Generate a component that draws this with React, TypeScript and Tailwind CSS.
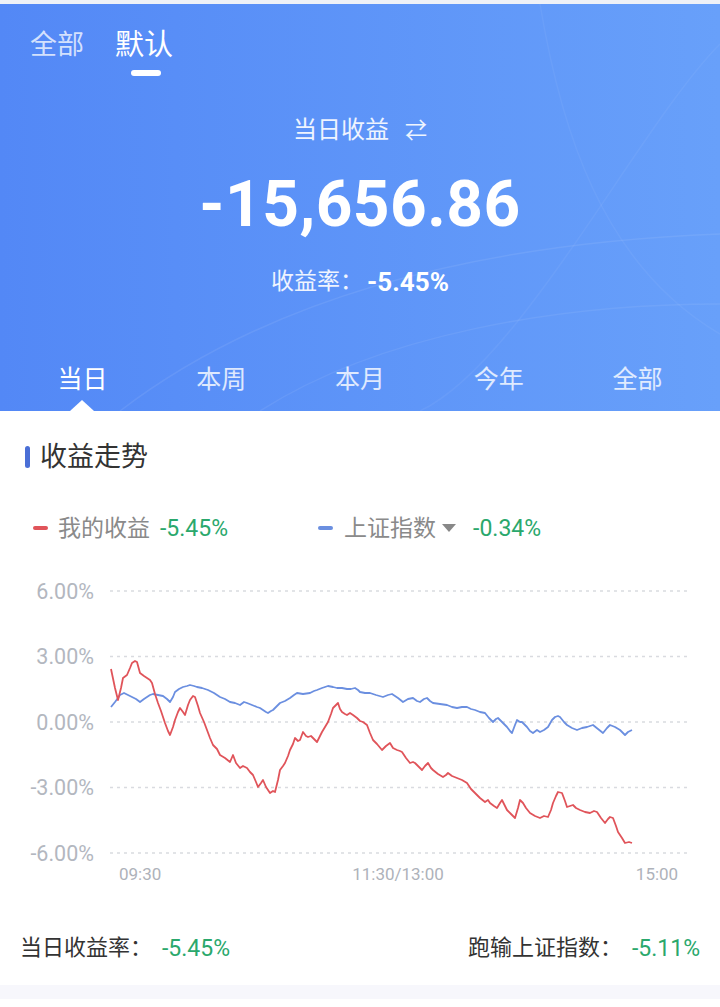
import React from "react";

// 收益曲线数据 (x: 像素, y: 像素)，在图表坐标系里直接描点
const MY_LINE: [number, number][] = [
  [111, 669], [115, 688], [118, 700], [121, 688], [123, 678], [127, 675], [130, 668], [132, 663],
  [135, 661], [137, 662], [140, 673], [144, 676], [147, 678], [150, 680], [152, 683], [155, 694],
  [158, 703], [161, 711], [165, 723], [168, 731], [170, 735], [173, 727], [175, 720], [178, 712],
  [180, 708], [183, 712], [185, 715], [188, 705], [190, 700], [193, 696], [195, 697], [198, 706],
  [200, 713], [204, 722], [207, 730], [210, 738], [213, 745], [217, 749], [220, 755], [225, 758],
  [230, 762], [233, 755], [236, 763], [240, 768], [243, 766], [247, 768], [250, 772], [253, 775],
  [256, 782], [258, 787], [261, 783], [263, 780], [266, 787], [270, 793], [273, 791], [275, 792],
  [278, 780], [280, 770], [283, 766], [285, 763], [288, 756], [290, 750], [293, 744], [295, 738],
  [298, 741], [300, 740], [303, 732], [306, 736], [308, 737], [311, 736], [313, 738], [317, 742],
  [320, 736], [322, 732], [325, 727], [328, 722], [331, 714], [333, 708], [336, 705], [338, 703],
  [340, 709], [342, 712], [345, 714], [347, 715], [350, 713], [353, 715], [357, 718], [360, 721],
  [363, 722], [367, 725], [370, 733], [373, 740], [377, 744], [382, 750], [386, 746], [390, 743],
  [393, 748], [397, 750], [400, 751], [402, 752], [406, 758], [410, 763], [413, 762], [415, 763],
  [419, 767], [422, 770], [425, 766], [428, 763], [431, 768], [433, 770], [438, 774], [443, 777],
  [446, 775], [448, 773], [452, 776], [457, 778], [462, 780], [467, 783], [471, 789], [475, 793],
  [480, 798], [485, 802], [488, 800], [490, 803], [494, 806], [497, 808], [500, 803], [502, 800],
  [505, 806], [507, 810], [511, 814], [515, 818], [518, 808], [520, 800], [523, 803], [526, 808],
  [530, 813], [535, 816], [540, 818], [544, 816], [548, 817], [551, 810], [553, 803], [556, 796],
  [558, 792], [562, 793], [565, 801], [567, 807], [570, 806], [573, 805], [576, 808], [580, 810],
  [585, 812], [590, 813], [594, 811], [597, 812], [601, 818], [605, 823], [608, 819], [610, 817],
  [613, 818], [616, 826], [618, 832], [622, 838], [625, 843], [629, 842], [632, 843],
];

const INDEX_LINE: [number, number][] = [
  [111, 707], [115, 702], [118, 698], [120, 695], [124, 693], [128, 695], [132, 697], [136, 699],
  [140, 702], [144, 699], [147, 697], [150, 695], [153, 694], [158, 695], [163, 696], [167, 699],
  [170, 702], [173, 697], [175, 692], [179, 689], [183, 687], [187, 686], [190, 685], [194, 686],
  [197, 687], [202, 688], [208, 690], [214, 693], [220, 697], [225, 699], [230, 702], [235, 703],
  [240, 705], [244, 702], [247, 703], [252, 705], [257, 707], [260, 708], [263, 710], [266, 712],
  [268, 713], [271, 711], [273, 710], [277, 706], [280, 703], [285, 701], [290, 698], [294, 695],
  [297, 693], [303, 694], [310, 693], [314, 691], [317, 690], [322, 688], [328, 686], [333, 687],
  [337, 688], [342, 688], [347, 689], [351, 689], [355, 688], [358, 690], [360, 692], [365, 693],
  [370, 693], [376, 695], [383, 697], [388, 695], [392, 694], [398, 698], [403, 702], [408, 699],
  [413, 698], [417, 701], [420, 702], [424, 699], [427, 698], [430, 701], [433, 703], [440, 704],
  [447, 705], [452, 707], [457, 708], [462, 707], [467, 707], [471, 709], [475, 710], [480, 712],
  [485, 713], [489, 718], [493, 722], [496, 719], [498, 718], [503, 723], [507, 727], [510, 731],
  [512, 733], [515, 725], [517, 720], [520, 722], [522, 722], [525, 725], [527, 727], [530, 731],
  [533, 733], [537, 730], [540, 732], [544, 730], [548, 727], [552, 720], [555, 717], [558, 716],
  [560, 717], [564, 722], [567, 725], [572, 728], [577, 730], [582, 728], [587, 727], [590, 726],
  [593, 725], [598, 729], [603, 733], [607, 728], [610, 725], [615, 727], [620, 730], [623, 733],
  [625, 735], [628, 732], [632, 730],
];

// 图表区域从页面 y=575 开始
const CHART_TOP = 575;

const toPoints = (data: [number, number][]) =>
  data.map(([x, y]) => `${x},${y - CHART_TOP}`).join(" ");

const Y_LABELS = ["6.00%", "3.00%", "0.00%", "-3.00%", "-6.00%"];

const FONT = 'Roboto, "Noto Sans CJK SC", sans-serif';

function ProfitChart() {
  return (
    <svg width="720" height="315" viewBox="0 0 720 315" className="block">
      {/* 网格线 + 纵轴刻度 */}
      {Y_LABELS.map((label, i) => {
        const y = 16 + i * 65.5;
        return (
          <g key={label}>
            <line
              x1="110"
              x2="690"
              y1={y}
              y2={y}
              stroke="#d9dbe0"
              strokeWidth="1.5"
              strokeDasharray="3 4"
            />
            <text
              x="94"
              y={y + 7.5}
              textAnchor="end"
              fontSize="21.5"
              fill="#b3b7bf"
              fontFamily={FONT}
            >
              {label}
            </text>
          </g>
        );
      })}

      {/* 横轴时间 */}
      <text x="119" y="305" fontSize="17" fill="#aeb2ba" fontFamily={FONT}>
        09:30
      </text>
      <text x="398" y="305" fontSize="17" fill="#aeb2ba" textAnchor="middle" fontFamily={FONT}>
        11:30/13:00
      </text>
      <text x="657" y="305" fontSize="17" fill="#aeb2ba" textAnchor="middle" fontFamily={FONT}>
        15:00
      </text>

      {/* 上证指数 */}
      <polyline
        points={toPoints(INDEX_LINE)}
        fill="none"
        stroke="#6b8fe0"
        strokeWidth="1.8"
        strokeLinejoin="round"
      />
      {/* 我的收益 */}
      <polyline
        points={toPoints(MY_LINE)}
        fill="none"
        stroke="#e0545a"
        strokeWidth="1.8"
        strokeLinejoin="round"
      />
    </svg>
  );
}

function HeaderDecor() {
  // 头部背景上淡淡的弧线
  return (
    <svg
      className="pointer-events-none absolute inset-0"
      width="720"
      height="407"
      viewBox="0 0 720 407"
    >
      <path d="M120 407 C 260 300, 460 240, 720 230" stroke="white" strokeOpacity="0.08" strokeWidth="1.5" fill="none" />
      <path d="M260 407 C 380 330, 560 300, 720 300" stroke="white" strokeOpacity="0.07" strokeWidth="1.5" fill="none" />
      <path d="M420 407 C 520 360, 640 120, 720 40" stroke="white" strokeOpacity="0.05" strokeWidth="1.5" fill="none" />
      <path d="M540 0 C 560 120, 600 260, 720 330" stroke="white" strokeOpacity="0.05" strokeWidth="1.5" fill="none" />
    </svg>
  );
}

const PERIODS = ["当日", "本周", "本月", "今年", "全部"];

export default function App() {
  return (
    <div
      className="w-[720px] h-[1007px] overflow-hidden bg-white"
      style={{ fontFamily: FONT }}
    >
      <div className="h-[4px] bg-[#eef1f7]" />

      {/* 顶部收益卡片 */}
      <div className="relative h-[407px] bg-gradient-to-r from-[#5388f6] to-[#68a0fa] text-white">
        <HeaderDecor />

        <div className="relative flex flex-col">
          {/* 账户切换 */}
          <div className="mt-[24px] flex h-[34px] items-center gap-[31px] pl-[30px] leading-none">
            <span className="text-[27px] text-white/75">全部</span>
            <span className="text-[29px] text-white">默认</span>
          </div>
          <div className="ml-[131px] mt-[8px] h-[6px] w-[30px] rounded-full bg-white" />

          <div className="mt-[39px] flex h-[30px] items-center justify-center gap-[16px] text-[24px] text-white/90">
            <span>当日收益</span>
            <span className="text-[22px]">⇄</span>
          </div>

          <div className="mt-[25px] flex h-[70px] items-center justify-center text-[64px] font-bold leading-none tracking-[0.5px]">
            -15,656.86
          </div>

          <div className="mt-[27px] flex h-[30px] items-center justify-center">
            <span className="text-[23px] text-white/90">收益率：</span>
            <span className="ml-[4px] text-[26px] font-bold">-5.45%</span>
          </div>

          {/* 时间段切换 */}
          <div className="mt-[65px] grid h-[34px] grid-cols-5 px-[13px] text-[25px] leading-none">
            {PERIODS.map((p, i) => (
              <div
                key={p}
                className={
                  "flex items-center justify-center " +
                  (i === 0 ? "text-white" : "text-white/80")
                }
              >
                {p}
              </div>
            ))}
          </div>
        </div>

        {/* 当前选中的小三角 */}
        <div className="absolute bottom-0 left-[70px] h-0 w-0 border-x-[12px] border-b-[11px] border-x-transparent border-b-white" />
      </div>

      {/* 收益走势 */}
      <div className="flex flex-col">
        <div className="mt-[29px] flex h-[34px] items-center pl-[25px]">
          <div className="h-[22px] w-[5px] rounded-full bg-[#4a6fd6]" />
          <span className="ml-[10px] text-[27px] leading-none text-[#333]">收益走势</span>
        </div>

        <div className="mt-[40px] flex h-[28px] items-center text-[23px] leading-none">
          <div className="ml-[33px] h-[4px] w-[15px] rounded-full bg-[#e0545a]" />
          <span className="ml-[10px] text-[#8a8a8a]">我的收益</span>
          <span className="ml-[10px] text-[#2aa86c]">-5.45%</span>

          <div className="ml-[90px] h-[4px] w-[15px] rounded-full bg-[#6b8fe0]" />
          <span className="ml-[11px] text-[#8a8a8a]">上证指数</span>
          <span className="ml-[6px] h-0 w-0 border-x-[7px] border-t-[8px] border-x-transparent border-t-[#888]" />
          <span className="ml-[17px] text-[#2aa86c]">-0.34%</span>
        </div>

        <div className="mt-[33px]">
          <ProfitChart />
        </div>

        <div className="mt-[43px] flex h-[30px] items-center justify-between px-[20px] leading-none">
          <div className="flex items-center">
            <span className="text-[22px] text-[#333]">当日收益率：</span>
            <span className="ml-[10px] text-[23px] text-[#2aa86c]">-5.45%</span>
          </div>
          <div className="flex items-center">
            <span className="text-[22px] text-[#333]">跑输上证指数：</span>
            <span className="ml-[10px] text-[23px] text-[#2aa86c]">-5.11%</span>
          </div>
        </div>

        <div className="mt-[22px] h-[14px] bg-[#f7f7fc]" />
      </div>
    </div>
  );
}
